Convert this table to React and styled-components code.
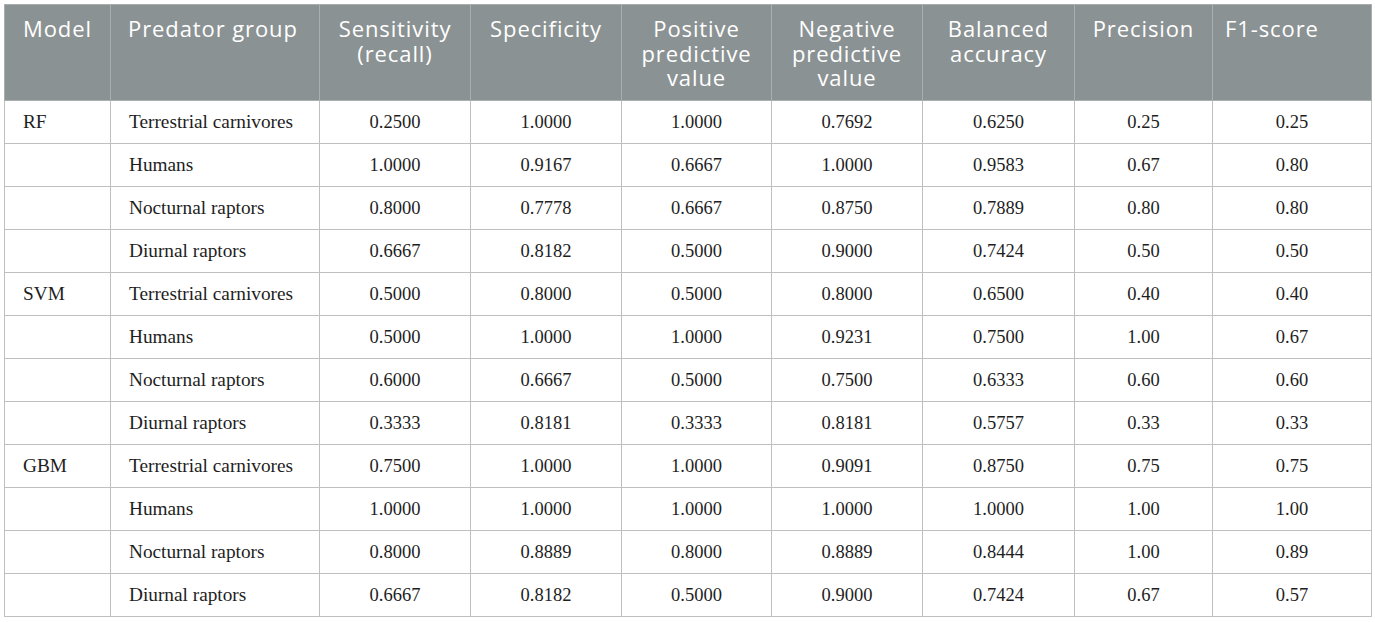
import React from "react";
import styled, { createGlobalStyle } from "styled-components";

const Global = createGlobalStyle`
  html, body { margin: 0; padding: 0; background: #ffffff; }
`;

const Page = styled.div`
  padding: 4px 0 0 4px;
`;

const Table = styled.table`
  border-collapse: collapse;
  table-layout: fixed;
  width: 1367px;
  border: 1px solid #bfbfbf;
`;

const HeadRow = styled.tr`
  height: 96px;
  background: #8b9293;
`;

const Th = styled.th`
  border: 1px solid #a9aeaf;
  color: #ffffff;
  font-family: "Open Sans", "DejaVu Sans", sans-serif;
  font-weight: 400;
  font-size: 22px;
  letter-spacing: 0.9px;
  line-height: 24.5px;
  vertical-align: top;
  padding: 11px 10px 0 ${(p) => p.$pl || 10}px;
  text-align: ${(p) => p.$align || "center"};
`;

const BodyRow = styled.tr`
  height: 43px;
`;

const Td = styled.td`
  border: 1px solid #bfbfbf;
  color: #1e1e1e;
  font-family: "Liberation Serif", "Times New Roman", serif;
  font-size: ${(p) => (p.$label ? 19.3 : 18.5)}px;
  vertical-align: middle;
  padding: 0 18px;
  text-align: ${(p) => (p.$label ? "left" : "center")};
`;

const widths = [106, 209, 151, 151, 150, 151, 152, 138, 159];

const headers = [
  { t: "Model", align: "left", pl: 18 },
  { t: "Predator group", align: "left", pl: 17 },
  { t: "Sensitivity (recall)" },
  { t: "Specificity" },
  { t: "Positive predictive value" },
  { t: "Negative predictive value" },
  { t: "Balanced accuracy" },
  { t: "Precision" },
  { t: "F1-score", align: "left", pl: 12 },
];

const rows = [
  ["RF", "Terrestrial carnivores", "0.2500", "1.0000", "1.0000", "0.7692", "0.6250", "0.25", "0.25"],
  ["", "Humans", "1.0000", "0.9167", "0.6667", "1.0000", "0.9583", "0.67", "0.80"],
  ["", "Nocturnal raptors", "0.8000", "0.7778", "0.6667", "0.8750", "0.7889", "0.80", "0.80"],
  ["", "Diurnal raptors", "0.6667", "0.8182", "0.5000", "0.9000", "0.7424", "0.50", "0.50"],
  ["SVM", "Terrestrial carnivores", "0.5000", "0.8000", "0.5000", "0.8000", "0.6500", "0.40", "0.40"],
  ["", "Humans", "0.5000", "1.0000", "1.0000", "0.9231", "0.7500", "1.00", "0.67"],
  ["", "Nocturnal raptors", "0.6000", "0.6667", "0.5000", "0.7500", "0.6333", "0.60", "0.60"],
  ["", "Diurnal raptors", "0.3333", "0.8181", "0.3333", "0.8181", "0.5757", "0.33", "0.33"],
  ["GBM", "Terrestrial carnivores", "0.7500", "1.0000", "1.0000", "0.9091", "0.8750", "0.75", "0.75"],
  ["", "Humans", "1.0000", "1.0000", "1.0000", "1.0000", "1.0000", "1.00", "1.00"],
  ["", "Nocturnal raptors", "0.8000", "0.8889", "0.8000", "0.8889", "0.8444", "1.00", "0.89"],
  ["", "Diurnal raptors", "0.6667", "0.8182", "0.5000", "0.9000", "0.7424", "0.67", "0.57"],
];

export default function App() {
  return (
    <Page>
      <Global />
      <Table>
        <colgroup>
          {widths.map((w, i) => (
            <col key={i} style={{ width: w }} />
          ))}
        </colgroup>
        <thead>
          <HeadRow>
            {headers.map((h, i) => (
              <Th key={i} $align={h.align} $pl={h.pl}>
                {h.t}
              </Th>
            ))}
          </HeadRow>
        </thead>
        <tbody>
          {rows.map((r, i) => (
            <BodyRow key={i}>
              {r.map((c, j) => (
                <Td key={j} $label={j < 2}>
                  {c}
                </Td>
              ))}
            </BodyRow>
          ))}
        </tbody>
      </Table>
    </Page>
  );
}
